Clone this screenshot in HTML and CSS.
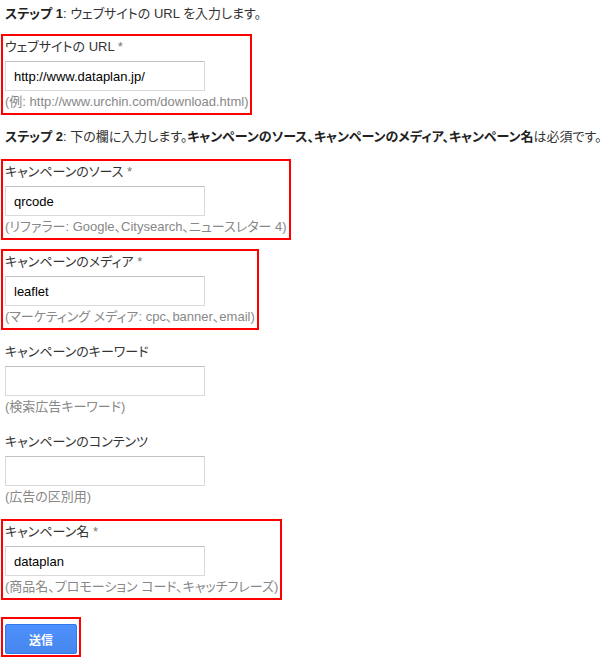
FILE: index.html
```html
<!DOCTYPE html>
<html lang="ja">
<head>
<meta charset="utf-8">
<title>URL 生成ツール</title>
<link rel="stylesheet" href="styles.css">
</head>
<body>
<div class="page">
  <p class="step step-1"><b>ステップ 1</b>: ウェブサイトの URL を入力します。</p>
  <div class="field marked">
    <div class="label">ウェブサイトの URL <span class="req">*</span></div>
    <input class="input" type="text" value="http://www.dataplan.jp/">
    <div class="hint">(例: http://www.urchin.com/download.html)</div>
  </div>
  <p class="step step-2"><b>ステップ 2</b>: 下の欄に入力します。<b>キャンペーンのソース、キャンペーンのメディア、キャンペーン名</b>は必須です。</p>
  <div class="field marked">
    <div class="label">キャンペーンのソース <span class="req">*</span></div>
    <input class="input" type="text" value="qrcode">
    <div class="hint">(リファラー: Google、Citysearch、ニュースレター 4)</div>
  </div>
  <div class="field marked">
    <div class="label">キャンペーンのメディア <span class="req">*</span></div>
    <input class="input" type="text" value="leaflet">
    <div class="hint">(マーケティング メディア: cpc、banner、email)</div>
  </div>
  <div class="field">
    <div class="label">キャンペーンのキーワード</div>
    <input class="input" type="text" value="">
    <div class="hint">(検索広告キーワード)</div>
  </div>
  <div class="field">
    <div class="label">キャンペーンのコンテンツ</div>
    <input class="input" type="text" value="">
    <div class="hint">(広告の区別用)</div>
  </div>
  <div class="field marked">
    <div class="label">キャンペーン名 <span class="req">*</span></div>
    <input class="input" type="text" value="dataplan">
    <div class="hint">(商品名、プロモーション コード、キャッチフレーズ)</div>
  </div>
  <div class="submit-box">
    <button class="submit" type="button">送信</button>
  </div>
</div>
</body>
</html>
```
FILE: styles.css
```css
html, body {
  margin: 0;
  padding: 0;
  background: #fff;
}
body {
  font-family: "Liberation Sans", "Noto Sans CJK JP", sans-serif;
  font-size: 13px;
  line-height: 18px;
  color: #333;
  font-feature-settings: "palt";
}
.page {
  padding: 5px 0 0 1px;
  display: flex;
  flex-direction: column;
  align-items: flex-start;
}
.step {
  margin: 0;
  padding-left: 4px;
  white-space: nowrap;
  color: #333;
}
.step b {
  color: #222;
}
.step-1 {
  margin-bottom: 11px;
}
.step-2 {
  margin: 4px 0 13px;
}
.field {
  border: 2px solid transparent;
  padding: 2px 2px 4px 2px;
  margin-bottom: 9px;
  display: flex;
  flex-direction: column;
  align-items: flex-start;
  white-space: nowrap;
}
.field.marked {
  border-color: #ff0000;
}
.label {
  color: #333;
  margin-bottom: 5px;
}
.req {
  color: #777;
}
.input {
  box-sizing: border-box;
  width: 200px;
  height: 30px;
  margin: 0;
  padding: 0 8px;
  border: 1px solid #d9d9d9;
  border-top-color: #c0c0c0;
  font-family: "Liberation Sans", "Noto Sans CJK JP", sans-serif;
  font-size: 13px;
  color: #000;
  background: #fff;
}
.hint {
  color: #888;
  margin-top: 2px;
  margin-bottom: -2px;
}
.submit-box {
  border: 2px solid #ff0000;
  padding: 5px 2px 1px 2px;
  margin-top: 8px;
}
.submit {
  display: block;
  width: 72px;
  height: 30px;
  margin: 0;
  padding: 0;
  border: 1px solid #3079ed;
  border-radius: 2px;
  background: linear-gradient(#4d90fe, #4787ed);
  color: #fff;
  font-family: "Liberation Sans", "Noto Sans CJK JP", sans-serif;
  font-size: 12px;
  font-weight: bold;
}
```
